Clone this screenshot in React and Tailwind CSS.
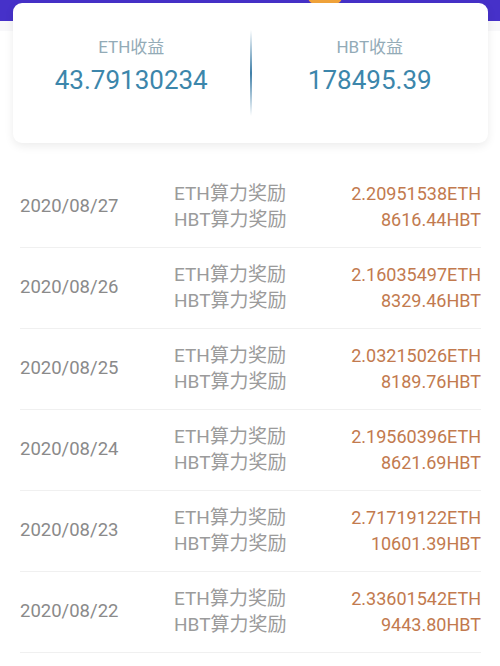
import React from 'react'

const ROWS = [
  { date: '2020/08/27', eth: '2.20951538ETH', hbt: '8616.44HBT' },
  { date: '2020/08/26', eth: '2.16035497ETH', hbt: '8329.46HBT' },
  { date: '2020/08/25', eth: '2.03215026ETH', hbt: '8189.76HBT' },
  { date: '2020/08/24', eth: '2.19560396ETH', hbt: '8621.69HBT' },
  { date: '2020/08/23', eth: '2.71719122ETH', hbt: '10601.39HBT' },
  { date: '2020/08/22', eth: '2.33601542ETH', hbt: '9443.80HBT' },
]

const font = { fontFamily: 'Roboto, "Noto Sans CJK SC", sans-serif' }

function Summary({ label, value }) {
  return (
    <div className="flex-1 flex flex-col items-center pt-[31px]">
      <div className="text-[17px] leading-[26px] text-[#93abb7]">{label}</div>
      <div className="text-[26px] leading-[34px] text-[#3c86ab] mt-[3px]">{value}</div>
    </div>
  )
}

export default function App() {
  return (
    <div className="w-[500px] h-[666px] overflow-hidden bg-white relative" style={font}>
      <div className="h-[21px] bg-[#4631c9] relative">
        <div className="absolute left-[308px] top-[-10px] w-[34px] h-[14px] rounded-full bg-[#f2a43a]" />
      </div>
      <div className="bg-[#f8f8fa] h-[10px]" />
      <div className="absolute left-[13px] top-[3px] w-[475px] h-[140px] rounded-[9px] bg-white shadow-[0_3px_10px_rgba(0,0,0,0.08)] flex">
        <Summary label="ETH收益" value="43.79130234" />
        <div className="w-[2px] my-[27px] bg-gradient-to-b from-transparent via-[#3f7fa8] to-transparent" />
        <Summary label="HBT收益" value="178495.39" />
      </div>

      <div className="mt-[136px] pl-[20px] pr-[19px]">
        {ROWS.map((r) => (
          <div key={r.date} className="h-[81px] flex items-center border-b border-[#f0f0f0]">
            <div className="w-[154px] text-[18.5px] text-[#8a8a8a] pt-[-1px]">{r.date}</div>
            <div className="flex flex-col text-[19px] leading-[26px] text-[#9b9b9b]">
              <span>ETH算力奖励</span>
              <span>HBT算力奖励</span>
            </div>
            <div className="ml-auto flex flex-col items-end text-[18px] leading-[26px] text-[#c27a4e]">
              <span>{r.eth}</span>
              <span>{r.hbt}</span>
            </div>
          </div>
        ))}
      </div>
    </div>
  )
}
